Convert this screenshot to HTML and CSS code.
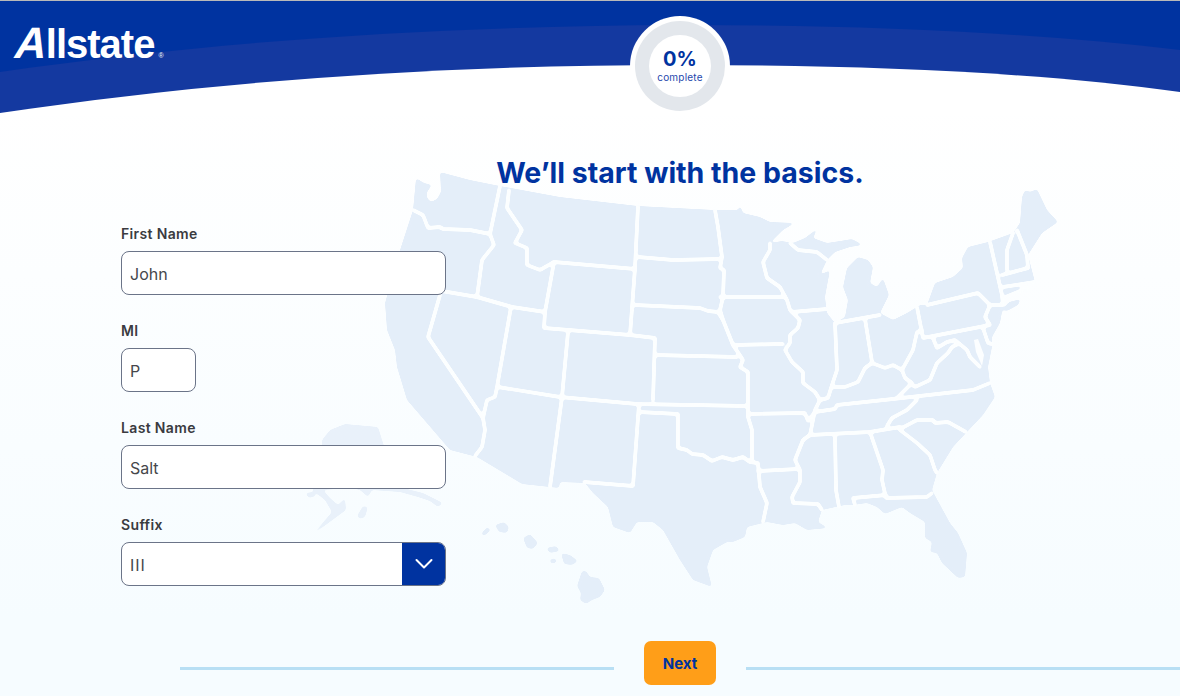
FILE: index.html
```html
<!DOCTYPE html>
<html lang="en">
<head>
<meta charset="utf-8">
<title>Allstate</title>
<link rel="stylesheet" href="styles.css">
</head>
<body>
<div class="page">
  <svg class="map" viewBox="0 0 1180 696" width="1180" height="696" aria-hidden="true">
    <defs>
      <filter id="soft" filterUnits="userSpaceOnUse" x="0" y="0" width="1180" height="696">
        <feGaussianBlur stdDeviation="1.6"/>
        <feComponentTransfer><feFuncA type="linear" slope="7" intercept="-3"/></feComponentTransfer>
      </filter>
      <filter id="softline" filterUnits="userSpaceOnUse" x="0" y="0" width="1180" height="696">
        <feGaussianBlur stdDeviation="0.9"/>
        <feComponentTransfer><feFuncA type="linear" slope="5" intercept="-1.6"/></feComponentTransfer>
      </filter>
    </defs>
    <g class="alaska" filter="url(#soft)">
      <path d="M322 440L330 430L345 424L378 427L384 446L400 484L407 489L423 493L443 503L438 507L430 501L418 497L400 492L372 490L368 497L360 490L350 488L323 490L330 498L338 505L345 498L346 510L323 527L308 538L320 526L332 512L325 500L312 490L330 470L322 455Z"/>
      <path d="M305 493L314 492L316 496L309 498Z"/>
      <path d="M357 516L363 506L368 507L365 517L360 519Z"/>
    </g>
    <g class="land" filter="url(#soft)">
      <path d="M416 178L424 183L432 185L427 192L427 198L431 202L437 199L441 192L440 172L470 180L500 186L560 197L638 206L715 210L738 210L740 205L743 213L760 217L770 222L795 223L783 230L770 243L782 241L793 243L805 238L818 228L813 238L827 243L840 241L852 239L863 245L850 247L835 252L827 260L820 275L830 270L825 297L827 313L835 323L845 317L848 300L843 287L847 268L858 257L868 260L873 267L870 283L877 287L883 278L889 295L880 313L893 320L907 313L920 305L927 305L935 283L953 277L963 268L962 258L968 247L988 242L1013 233L1020 223L1022 197L1025 190L1030 192L1037 189L1047 210L1058 222L1042 233L1028 255L1035 282L1027 283L1018 292L1003 298L1003 305L1002 312L1000 323L992 337L992 347L988 367L990 383L995 397L983 415L967 432L953 447L937 473L932 490L950 523L958 533L967 553L965 577L958 578L942 563L937 553L930 552L932 542L925 538L925 522L910 513L902 507L885 514L877 507L867 503L853 505L845 505L822 510L818 522L828 528L807 530L795 523L783 525L767 522L747 527L745 537L733 542L727 542L713 550L707 567L712 587L693 580L680 560L663 530L653 522L637 522L630 533L613 527L608 507L593 493L585 483L560 482L559 488L522 484L477 457L450 450L407 400L397 367L395 350L387 330L385 303L400 250L413 210Z"/>
      <path d="M1002 310L1009 302L1021 299L1018 305L1007 311Z"/>
      <path d="M481 534L487 527L491 530L484 536Z"/>
      <path d="M495 525L504 522L509 527L507 533L499 532Z"/>
      <path d="M523 538L530 534L538 543L533 549L527 548Z"/>
      <path d="M546 548L556 546L560 551L550 553Z"/>
      <path d="M549 560L555 558L557 562L552 564Z"/>
      <path d="M561 553L570 555L578 561L572 565L564 564Z"/>
      <path d="M582 571L586 571L590 577L599 578L605 590L600 597L592 600L586 604L580 600L581 593L577 586Z"/>
    </g>
    <g class="borders" filter="url(#softline)">
      <path d="M413 210L423 215L428 228L440 227L443 229L470 230L490 234"/>
      <path d="M500 186L490 234L494 245L482 260L477 297"/>
      <path d="M430 289L477 297L512 307L545 312"/>
      <path d="M440 295L428 337L483 418L485 430L482 447L475 456"/>
      <path d="M511 307L497 387L495 397L487 400L483 418"/>
      <path d="M509 190L507 208L522 230L515 243L527 248L527 265L540 270L554 262"/>
      <path d="M554 262L545 312L544 328L630 335L655 338L653 400"/>
      <path d="M554 262L635 269"/>
      <path d="M568 332L562 397L550 487"/>
      <path d="M638 206L635 268L630 335"/>
      <path d="M638 257L673 260L721 259"/>
      <path d="M635 305L700 308L708 311L718 312L723 320L733 345L743 360L740 367L748 372L748 417L752 430L752 460"/>
      <path d="M715 210L718 227L722 257L720 268L724 270L723 297L720 310L723 320"/>
      <path d="M655 355L737 357"/>
      <path d="M498 387L560 397L637 404L747 406"/>
      <path d="M639 404L633 486L584 482"/>
      <path d="M639 412L678 414L678 448L687 450L692 454L703 455L712 461L722 457L733 460L743 457L750 462L758 463L760 487L767 503L763 522"/>
      <path d="M720 297L785 297"/>
      <path d="M733 345L783 344"/>
      <path d="M770 243L770 250L763 262L767 278L780 287L787 300L790 310L800 320L798 328L790 335L790 343L785 350L792 362L803 372L803 383L815 392L820 400L815 410L810 435L803 440L795 460L800 470L800 482L792 497L793 503L818 504L822 510"/>
      <path d="M792 312L827 309"/>
      <path d="M790 243L798 250L817 252L827 260"/>
      <path d="M835 323L837 370L832 385L828 398L820 400"/>
      <path d="M835 323L880 315"/>
      <path d="M865 319L872 362"/>
      <path d="M833 387L845 387L858 382L865 368L872 363L885 368L893 365L902 370L905 378L912 383L897 398"/>
      <path d="M902 370L913 350L917 332L922 330"/>
      <path d="M917 307L923 338L990 325L985 317L990 305L978 293L927 305"/>
      <path d="M990 305L1002 305"/>
      <path d="M990 242L1002 295L1003 305"/>
      <path d="M1013 233L1007 250L1007 270"/>
      <path d="M1017 230L1027 255L1028 268"/>
      <path d="M1002 275L1028 268"/>
      <path d="M1003 287L1035 282"/>
      <path d="M1022 285L1022 292"/>
      <path d="M1026 285L1027 291"/>
      <path d="M1003 298L1020 291"/>
      <path d="M983 328L988 343L992 344"/>
      <path d="M933 338L937 348L947 342L955 340L967 350L970 357L980 367"/>
      <path d="M910 383L915 387L930 380L937 363L948 353L952 347L958 344"/>
      <path d="M748 414L805 413L808 421L815 412L835 409L837 405L893 399L973 390L990 383"/>
      <path d="M758 471L798 469"/>
      <path d="M810 435L870 432L900 427"/>
      <path d="M887 426L892 418L907 410L917 400"/>
      <path d="M900 429L917 420L933 420L935 423L948 422L966 432"/>
      <path d="M900 430L917 443L930 455L935 470L937 473"/>
      <path d="M870 432L883 470L882 480L886 498L927 497L932 493"/>
      <path d="M886 495L853 498L855 505"/>
      <path d="M835 435L836 490L839 507"/>
    </g>
    <path class="bay" d="M974 340L978 339L984 355L982 366L976 352Z"/>
  </svg>

  <header class="site-header">
    <svg class="waves" viewBox="0 0 1180 116" width="1180" height="116" aria-hidden="true">
      <rect class="wave-back" width="1180" height="116"/>
      <path class="wave-mid" d="M0 72C220 40 450 26 680 25C860 25 1030 32 1180 50V116H0Z"/>
      <path class="wave-white" d="M0 113C220 80 450 65 680 65C860 65 1040 72 1180 92V116H0Z"/>
    </svg>
    <div class="logo"><span class="logo-a">A</span>llstate<span class="reg">®</span></div>
    <div class="progress">
      <div class="progress-ring">
        <div class="progress-inner">
          <strong>0%</strong>
          <span>complete</span>
        </div>
      </div>
    </div>
  </header>

  <main class="content">
    <h1>We’ll start with the basics.</h1>
    <form class="form">
      <div class="field">
        <label for="first">First Name</label>
        <input id="first" class="input" type="text" value="John">
      </div>
      <div class="field">
        <label for="mi">MI</label>
        <input id="mi" class="input input-short" type="text" value="P">
      </div>
      <div class="field">
        <label for="last">Last Name</label>
        <input id="last" class="input" type="text" value="Salt">
      </div>
      <div class="field">
        <label>Suffix</label>
        <div class="select">
          <span class="select-value">III</span>
          <span class="select-arrow">
            <svg viewBox="0 0 18 12" width="18" height="12" aria-hidden="true"><path d="M1.5 2L9 9.5L16.5 2"/></svg>
          </span>
        </div>
      </div>
    </form>
  </main>

  <footer class="footer">
    <span class="rule"></span>
    <button class="next" type="button">Next</button>
    <span class="rule"></span>
  </footer>
</div>
</body>
</html>
```
FILE: styles.css
```css
* { box-sizing: border-box; }
html, body { margin: 0; padding: 0; }
body { font-family: "Inter", "Liberation Sans", sans-serif; color: #3a3b3f; }
.page {
  position: relative;
  width: 1180px;
  height: 696px;
  overflow: hidden;
  background: linear-gradient(#ffffff 100px, #f6fcff 620px);
  display: flex;
  flex-direction: column;
}
.page::before {
  content: "";
  position: absolute;
  left: 0; right: 0; top: 0;
  height: 1px;
  background: #b9b9b9;
  z-index: 3;
}
.map { position: absolute; left: 0; top: 0; }
.land path { fill: #e4eef9; }
.alaska { fill: #e4eef9; opacity: .75; }
.borders path { fill: none; stroke: #fcfeff; stroke-width: 3.4; stroke-linejoin: round; stroke-linecap: round; }
.bay { fill: #fcfeff; }

.site-header { position: relative; height: 155px; flex: none; padding: 20px 0 0 16px; }
.waves { position: absolute; left: 0; top: 0; }
.wave-back { fill: #0033a0; }
.wave-mid { fill: #1439a0; }
.wave-white { fill: #ffffff; }
.logo {
  position: relative;
  font-family: "Liberation Sans", Arial, sans-serif;
  font-weight: 700;
  font-size: 40px;
  line-height: 46px;
  letter-spacing: -1px;
  color: #fff;
  display: flex;
  align-items: baseline;
}
.logo-a { display: inline-block; transform: skewX(-14deg); font-size: 44px; margin-right: -1px; }
.reg { font-size: 7px; font-weight: 400; letter-spacing: 0; margin-left: 4px; }
.progress {
  position: absolute;
  left: 630px; top: 16px;
  width: 100px; height: 100px;
  border-radius: 50%;
  background: #fff;
  display: flex;
  align-items: center;
  justify-content: center;
}
.progress-ring {
  width: 90px; height: 90px;
  border-radius: 50%;
  background: #e3e7ec;
  display: flex;
  align-items: center;
  justify-content: center;
}
.progress-inner {
  width: 62px; height: 62px;
  border-radius: 50%;
  background: #fff;
  color: #0033a0;
  display: flex;
  flex-direction: column;
  align-items: center;
  justify-content: center;
  padding-bottom: 3px;
}
.progress-inner strong { font-size: 20px; line-height: 26px; font-weight: 700; }
.progress-inner span { font-size: 10px; line-height: 11px; letter-spacing: .2px; color: #1f49ad; }

.content { position: relative; flex: none; height: 486px; }
.content h1 {
  margin: 0;
  padding-left: 180px;
  text-align: center;
  color: #0033a0;
  font-size: 28.5px;
  line-height: 36px;
  font-weight: 700;
}
.form { padding: 33px 0 0 121px; width: 446px; display: flex; flex-direction: column; gap: 26px; }
.field { display: flex; flex-direction: column; gap: 8px; }
.field label { font-size: 14px; line-height: 19px; font-weight: 600; letter-spacing: .35px; color: #3a3b3f; }
.input {
  width: 325px;
  height: 44px;
  border: 1px solid #6b7488;
  border-radius: 8px;
  background: #fff;
  padding: 2px 8px 0;
  font: 400 16px "Inter", "Liberation Sans", sans-serif;
  color: #46474b;
}
.input-short { width: 75px; }
.select {
  width: 325px;
  height: 44px;
  border: 1px solid #6b7488;
  border-radius: 8px;
  background: #fff;
  display: flex;
  align-items: stretch;
  justify-content: space-between;
  overflow: hidden;
  font-size: 16px;
}
.select-value { padding-left: 8px; line-height: 44px; letter-spacing: 1px; color: #46474b; }
.select-arrow { width: 43px; background: #0033a0; display: flex; align-items: center; justify-content: center; }
.select-arrow path { fill: none; stroke: #fff; stroke-width: 2; stroke-linecap: round; stroke-linejoin: round; }

.footer { position: relative; flex: none; display: flex; align-items: center; padding-left: 180px; gap: 30px; }
.rule { flex: 1; height: 3px; background: #b8dff4; margin-top: 10px; }
.next {
  width: 72px;
  height: 44px;
  border: 0;
  border-radius: 7px;
  background: #ff9e18;
  color: #0033a0;
  font: 700 15px "Inter", "Liberation Sans", sans-serif;
}
```
